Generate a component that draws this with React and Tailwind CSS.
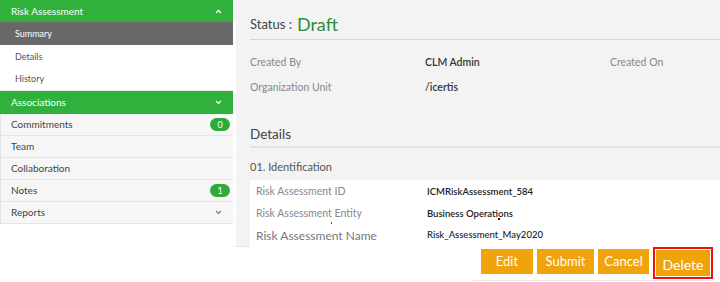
import React from "react";

const ChevronUp = () => (
  <svg width="7" height="5" viewBox="0 0 7 5" fill="none">
    <path d="M1 4 L3.5 1.5 L6 4" stroke="white" strokeWidth="1.3" />
  </svg>
);

const ChevronDown = ({ color = "white" }) => (
  <svg width="7" height="5" viewBox="0 0 7 5" fill="none">
    <path d="M1 1 L3.5 3.5 L6 1" stroke={color} strokeWidth="1.1" />
  </svg>
);

function Sidebar() {
  const assoc = [
    { label: "Commitments", badge: "0" },
    { label: "Team" },
    { label: "Collaboration" },
    { label: "Notes", badge: "1" },
    { label: "Reports", chevron: true },
  ];

  return (
    <div className="w-[233px] shrink-0 text-[10px]">
      <div className="h-[22px] bg-[#30b13c] text-white flex items-center justify-between pl-[11px] pr-[11px]">
        <span>Risk Assessment</span>
        <ChevronUp />
      </div>
      <div className="h-[23px] bg-[#686868] text-white flex items-center pl-[15px] text-[9px]">
        Summary
      </div>
      <div className="h-[23px] bg-white text-[#555] flex items-center pl-[15px] text-[9px]">
        Details
      </div>
      <div className="h-[23px] bg-white text-[#555] flex items-center pl-[15px] text-[9px] border-b border-[#e6e6e6]">
        History
      </div>
      <div className="h-[23px] bg-[#30b13c] text-white flex items-center justify-between pl-[11px] pr-[11px]">
        <span>Associations</span>
        <ChevronDown />
      </div>
      {assoc.map((item) => (
        <div
          key={item.label}
          className="h-[22px] bg-[#f6f6f6] text-[#444] flex items-center justify-between pl-[10px] pr-[3px] border-b border-[#e4e4e4] border-l"
        >
          <span>{item.label}</span>
          {item.badge && (
            <span className="h-[13px] min-w-[20px] px-[6px] rounded-full bg-[#2eaa3a] text-white text-[9px] leading-none flex items-center justify-center">
              {item.badge}
            </span>
          )}
          {item.chevron && (
            <span className="pr-[8px]">
              <ChevronDown color="#777" />
            </span>
          )}
        </div>
      ))}
    </div>
  );
}

function MainPanel() {
  return (
    <div className="flex-1 bg-[#f3f3f3] h-[247px] pl-[14px] text-[10.5px] border-b border-[#e3e3e3]">
      <div className="h-[40px] flex items-end pb-[6px] gap-[5px] border-b border-[#d6d6d6]">
        <span className="text-[13px] text-[#444] leading-none pb-[2px]">Status :</span>
        <span className="text-[18px] text-[#2e8f3a] leading-none">Draft</span>
      </div>
      <div className="pt-[10px]">
        <div className="flex items-center h-[25px]">
          <div className="w-[175px] text-[#888]">Created By</div>
          <div className="w-[185px] font-semibold text-[#333]">CLM Admin</div>
          <div className="text-[#888]">Created On</div>
        </div>
        <div className="flex items-center h-[25px]">
          <div className="w-[175px] text-[#888]">Organization Unit</div>
          <div className="font-semibold text-[#333]">/icertis</div>
        </div>
      </div>
      <div className="mt-[22px] h-[26px] flex items-center text-[13.5px] text-[#444] border-b-2 border-[#e2e2e2]">
        Details
      </div>
      <div className="h-[32px] flex items-end pb-[5px] text-[11px] text-[#555]">
        01. Identification
      </div>
      <div className="bg-white h-[68px] pl-[6px] pt-[1px]">
        <div className="flex items-center h-[22px]">
          <div className="w-[171px] text-[#888]">Risk Assessment ID</div>
          <div className="font-semibold text-[#222] text-[9.5px]">ICMRiskAssessment_584</div>
        </div>
        <div className="flex items-center h-[22px] relative">
          <div className="w-[171px] text-[#888]">Risk Assessment Entity</div>
          <div className="font-semibold text-[#222] text-[9.5px]">Business Operations</div>
          <span className="absolute left-[75px] top-[19px] w-[1px] h-[2px] bg-[#555]" />
          <span className="absolute left-[242px] top-[15px] w-[2px] h-[2px] bg-[#222]" />
        </div>
        <div className="flex items-center h-[21px]">
          <div className="w-[171px] text-[#777] text-[12px]">Risk Assessment Name</div>
          <div className="text-[#222] text-[9.5px] font-medium">Risk_Assessment_May2020</div>
        </div>
      </div>
    </div>
  );
}

function Buttons() {
  const btn =
    "h-[25px] bg-[#f0a30a] text-white text-[13px] flex items-center justify-center";
  return (
    <div className="flex justify-end items-start pr-[7px] pt-[1px]">
      <div className="flex items-start gap-[4px] pl-[8px] border-b border-[#e8e8e8] h-[33px]">
        <div className={`${btn} w-[52px] mt-[1px]`}>Edit</div>
        <div className={`${btn} w-[57px] mt-[1px]`}>Submit</div>
        <div className={`${btn} w-[51px] mt-[1px]`}>Cancel</div>
        <div className="border-2 border-[#e11] p-[1px] -mt-[1px]">
          <div className={`${btn} w-[54px] h-[26px] pt-[3px] text-[14px]`}>Delete</div>
        </div>
      </div>
    </div>
  );
}

export default function App() {
  return (
    <div
      className="w-[720px] h-[282px] bg-white overflow-hidden"
      style={{ fontFamily: "Lato, 'Open Sans', sans-serif" }}
    >
      <div className="flex gap-[3px]">
        <Sidebar />
        <MainPanel />
      </div>
      <Buttons />
    </div>
  );
}
